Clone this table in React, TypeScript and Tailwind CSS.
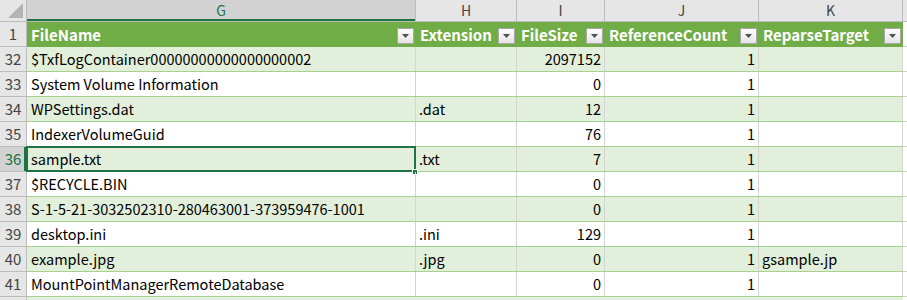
const font = { fontFamily: '"Noto Sans CJK JP", "Noto Sans", sans-serif' };

type Row = {
  n: number;
  name: string;
  ext: string;
  size: string;
  ref: string;
  target: string;
};

const rows: Row[] = [
  { n: 32, name: "$TxfLogContainer00000000000000000002", ext: "", size: "2097152", ref: "1", target: "" },
  { n: 33, name: "System Volume Information", ext: "", size: "0", ref: "1", target: "" },
  { n: 34, name: "WPSettings.dat", ext: ".dat", size: "12", ref: "1", target: "" },
  { n: 35, name: "IndexerVolumeGuid", ext: "", size: "76", ref: "1", target: "" },
  { n: 36, name: "sample.txt", ext: ".txt", size: "7", ref: "1", target: "" },
  { n: 37, name: "$RECYCLE.BIN", ext: "", size: "0", ref: "1", target: "" },
  { n: 38, name: "S-1-5-21-3032502310-280463001-373959476-1001", ext: "", size: "0", ref: "1", target: "" },
  { n: 39, name: "desktop.ini", ext: ".ini", size: "129", ref: "1", target: "" },
  { n: 40, name: "example.jpg", ext: ".jpg", size: "0", ref: "1", target: "gsample.jp" },
  { n: 41, name: "MountPointManagerRemoteDatabase", ext: "", size: "0", ref: "1", target: "" },
];

const FilterButton = () => (
  <span className="absolute right-[1px] top-[6px] flex h-[16px] w-[17px] items-center justify-center border border-[#a8a8a8] bg-gradient-to-b from-white to-[#e4e4e4]">
    <svg width="7" height="4" viewBox="0 0 7 4">
      <path d="M0 0h7L3.5 4z" fill="#505050" />
    </svg>
  </span>
);

const HeaderCell = ({ w, label }: { w: string; label: string }) => (
  <div className={`relative ${w} h-full shrink-0 border-r border-[#70ad47] pl-[4px] text-[15px] font-bold text-white`}>
    <span className="leading-[25px]">{label}</span>
    <FilterButton />
  </div>
);

const App = () => {
  return (
    <div className="h-[300px] w-[907px] overflow-hidden bg-white text-[14.5px] text-black" style={font}>
      {/* column letters */}
      <div className="flex h-[22px] border-b border-[#bcbcbc] bg-[#e6e6e6] text-[14px] text-[#444]">
        <div className="relative w-[27px] shrink-0 border-r border-[#bcbcbc]">
          <svg className="absolute bottom-[3px] right-[3px]" width="15" height="15" viewBox="0 0 15 15">
            <path d="M15 0v15H0z" fill="#b4b4b4" />
          </svg>
        </div>
        <div className="flex w-[389px] shrink-0 items-center justify-center border-r border-[#bcbcbc] bg-[#d2d2d2] text-[#217346] shadow-[inset_0_-2px_0_#217346]">G</div>
        <div className="flex w-[101px] shrink-0 items-center justify-center border-r border-[#bcbcbc]">H</div>
        <div className="flex w-[88px] shrink-0 items-center justify-center border-r border-[#bcbcbc]">I</div>
        <div className="flex w-[154px] shrink-0 items-center justify-center border-r border-[#bcbcbc]">J</div>
        <div className="flex w-[144px] shrink-0 items-center justify-center border-r border-[#bcbcbc]">K</div>
        <div className="flex-1" />
      </div>

      {/* table header row */}
      <div className="flex h-[25px]">
        <div className="flex w-[27px] shrink-0 items-center justify-center border-b border-r border-[#bcbcbc] bg-[#e6e6e6] text-[15px] text-[#444]">1</div>
        <div className="flex border-b border-[#70ad47] bg-[#70ad47]">
          <HeaderCell w="w-[389px]" label="FileName" />
          <HeaderCell w="w-[101px]" label="Extension" />
          <HeaderCell w="w-[88px]" label="FileSize" />
          <HeaderCell w="w-[154px]" label="ReferenceCount" />
          <HeaderCell w="w-[144px]" label="ReparseTarget" />
        </div>
        <div className="flex-1 border-b border-[#d4d4d4]" />
      </div>

      {rows.map((r) => {
        const band = r.n % 2 === 0;
        const selected = r.n === 36;
        const bg = band ? "bg-[#e2efda]" : "bg-white";
        return (
          <div key={r.n} className="flex h-[25px]">
            <div
              className={`flex w-[27px] shrink-0 items-center justify-center border-b border-r border-[#bcbcbc] text-[15px] ${
                selected ? "bg-[#d2d2d2] text-[#217346] shadow-[inset_-2px_0_0_#217346]" : "bg-[#e6e6e6] text-[#444]"
              }`}
            >
              {r.n}
            </div>
            <div className={`flex border-b border-[#a9d08e] ${bg}`}>
              <div className="relative w-[389px] shrink-0 border-r border-[#d4d4d4] pl-[4px] leading-[24px] whitespace-nowrap">
                {r.name}
                {selected && (
                  <>
                    <span className="absolute -left-[1px] -top-[1px] h-[26px] w-[390px] border-2 border-[#217346]" />
                    <span className="absolute -right-[3px] -bottom-[4px] h-[6px] w-[6px] border border-white bg-[#217346]" />
                  </>
                )}
              </div>
              <div className="w-[101px] shrink-0 border-r border-[#d4d4d4] pl-[3px] leading-[24px]">{r.ext}</div>
              <div className="w-[88px] shrink-0 border-r border-[#d4d4d4] pr-[3px] text-right leading-[24px]">{r.size}</div>
              <div className="w-[154px] shrink-0 border-r border-[#d4d4d4] pr-[3px] text-right leading-[24px]">{r.ref}</div>
              <div className="w-[144px] shrink-0 border-r border-[#d4d4d4] pl-[3px] leading-[24px] whitespace-nowrap">{r.target}</div>
            </div>
            <div className="flex-1 border-b border-[#d4d4d4]" />
          </div>
        );
      })}

      {/* partially visible row 42 */}
      <div className="flex h-[25px]">
        <div className="w-[27px] shrink-0 border-r border-[#bcbcbc] bg-[#e6e6e6]" />
        <div className="w-[876px] shrink-0 bg-[#e2efda]" />
        <div className="flex-1" />
      </div>
    </div>
  );
};

export default App;
